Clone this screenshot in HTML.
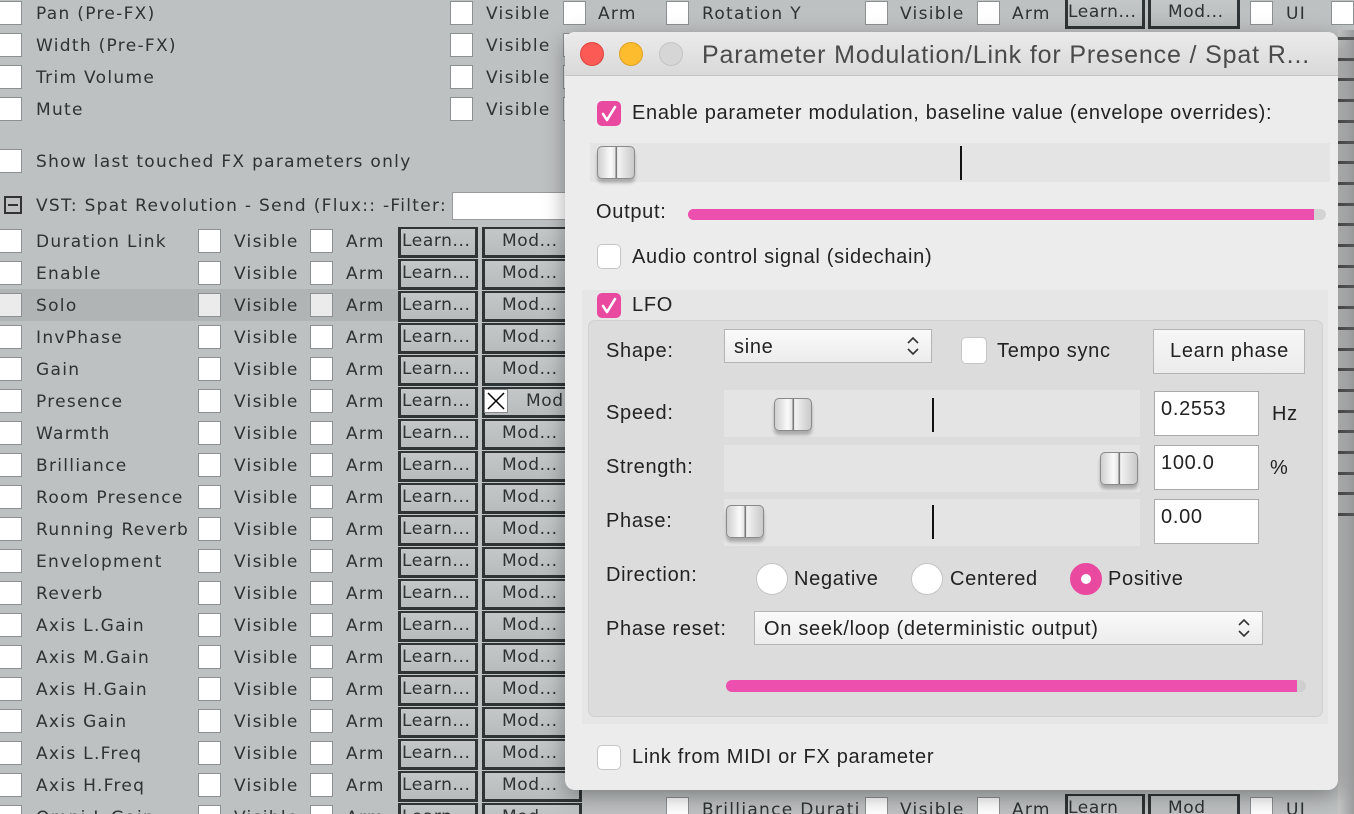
<!DOCTYPE html>
<html><head><meta charset="utf-8">
<style>
*{box-sizing:border-box;margin:0;padding:0}
html,body{width:1354px;height:814px;overflow:hidden}
body{background:#bec1c2;position:relative;font-family:"DejaVu Sans","Liberation Sans",sans-serif}
.a{position:absolute}
.bt{font-size:17px;color:#2e3233;letter-spacing:1.3px;line-height:20px;white-space:nowrap}
.cb{width:23px;height:24px;background:#fff;border:1px solid #8d9091}
.btn{border:3px solid #2f3436;border-top-width:2px;background:linear-gradient(#c4c7c8,#b9bcbd);font-size:17px;color:#2e3233;line-height:24px;white-space:nowrap;overflow:hidden;letter-spacing:0.6px}
#dlg{position:absolute;left:565px;top:32px;width:773px;height:758px;background:#ececec;border-radius:10px;box-shadow:0 6px 22px rgba(0,0,0,.35);overflow:hidden;font-family:"Liberation Sans",sans-serif;color:#222}
.d{position:absolute;font-size:20px;letter-spacing:0.7px;white-space:nowrap;line-height:22px}
.pk{position:absolute;width:24px;height:25px;background:#e9499f;border-radius:5px}
.wc{position:absolute;width:24px;height:25px;background:#fff;border:1px solid #c6c6c6;border-radius:5px}
.trk{position:absolute;background:#e4e4e4}
.th{position:absolute;width:38px;height:33px;border:1px solid #8a8a8a;border-radius:5px;background:linear-gradient(90deg,#cfcfcf,#fafafa 35%,#e4e4e4 48%,#777 49%,#777 52%,#f4f4f4 54%,#c9c9c9);box-shadow:0 4px 3px rgba(0,0,0,.25)}
.inp{position:absolute;background:#fff;border:1px solid #aaa;font-size:20px;letter-spacing:0.7px;padding:6px 0 0 6px}
.rd{position:absolute;width:32px;height:32px;border-radius:50%;background:#fff;border:1px solid #c4c4c4}
</style></head><body>
<div id="bg"></div>
<script>
var bg=document.getElementById('bg'),h='';
function t(x,y,s){h+='<div class="a bt" style="left:'+x+'px;top:'+(y-9)+'px">'+s+'</div>';}
function c(x,y,g){h+='<div class="a cb" style="left:'+x+'px;top:'+(y-12)+'px'+(g?';background:#ebebeb':'')+'"></div>';}
var top4=['Pan (Pre-FX)','Width (Pre-FX)','Trim Volume','Mute'];
for(var i=0;i<4;i++){var y=13+32*i;c(-1,y);t(36,y,top4[i]);c(450,y);t(486,y,'Visible');c(563,y);t(598,y,'Arm');}
c(-1,161);t(36,161,'Show last touched FX parameters only');
h+='<div class="a" style="left:4px;top:196px;width:18px;height:18px;border:2px solid #333"></div><div class="a" style="left:8px;top:204px;width:10px;height:2px;background:#333"></div>';
t(36,205,'VST: Spat Revolution - Send (Flux:: -Filter:');
h+='<div class="a" style="left:452px;top:192px;width:120px;height:28px;background:#fff;border:1px solid #999"></div>';
var names=['Duration Link','Enable','Solo','InvPhase','Gain','Presence','Warmth','Brilliance','Room Presence','Running Reverb','Envelopment','Reverb','Axis L.Gain','Axis M.Gain','Axis H.Gain','Axis Gain','Axis L.Freq','Axis H.Freq','Omni L.Gain'];
for(var i=0;i<names.length;i++){var y=241+32*i;var g=(i==2);
 if(g)h+='<div class="a" style="left:0;top:'+(y-16)+'px;width:398px;height:32px;background:#b1b4b5"></div>';
 c(-1,y,g);h+='<div class="a bt" style="left:36px;top:'+(y-9)+'px;width:158px;overflow:hidden">'+names[i]+'</div>';
 c(198,y,g);t(234,y,'Visible');c(310,y,g);t(346,y,'Arm');
 h+='<div class="a btn" style="left:398px;top:'+(y-14)+'px;width:80px;height:31px;padding-left:1px">Learn...</div>';
 h+='<div class="a btn" style="left:482px;top:'+(y-14)+'px;width:100px;height:31px;padding-left:17px">'+(i==5?'&nbsp;&nbsp;&nbsp;&nbsp;Mod':'Mod...')+'</div>';
 if(i==5)h+='<div class="a" style="left:484px;top:'+(y-12)+'px;width:24px;height:24px;background:#fff;border:1px solid #888"><svg width="22" height="22"><path d="M3 3L19 19M19 3L3 19" stroke="#000" stroke-width="1.5"/></svg></div>';
}
c(666,13);t(702,13,'Rotation Y');c(865,13);t(900,13,'Visible');c(977,13);t(1012,13,'Arm');
h+='<div class="a btn" style="left:1065px;top:-2px;width:80px;height:31px">Learn...</div>';
h+='<div class="a btn" style="left:1148px;top:-2px;width:92px;height:31px;padding-left:17px">Mod...</div>';
c(1250,13);t(1286,13,'UI');c(1331,13);
c(666,809);t(702,809,'Brilliance Durati');c(865,809);t(900,809,'Visible');c(977,809);t(1012,809,'Arm');
h+='<div class="a btn" style="left:1065px;top:794px;width:80px;height:31px">Learn</div>';
h+='<div class="a btn" style="left:1148px;top:794px;width:92px;height:31px;padding-left:17px">Mod</div>';
c(1250,809);t(1286,809,'UI');
h+='<div class="a" style="left:1338px;top:30px;width:16px;height:784px;background:linear-gradient(90deg,#c8c8c8,#9a9c9d)"></div>';
for(var i=0;i<24;i++)h+='<div class="a" style="left:1338px;top:'+(37+i*20.7)+'px;width:16px;height:3px;background:#555"></div>';
bg.innerHTML=h;
</script>
<div id="dlg">
 <div class="a" style="left:0;top:0;width:773px;height:44px;background:linear-gradient(#ebebeb,#d9d9d9);border-bottom:1px solid #c4c4c4"></div>
 <div class="a" style="left:15px;top:10px;width:24px;height:24px;border-radius:50%;background:#fc5a55;border:1px solid #e0443e"></div>
 <div class="a" style="left:54px;top:10px;width:24px;height:24px;border-radius:50%;background:#fdbc2e;border:1px solid #dfa123"></div>
 <div class="a" style="left:94px;top:10px;width:24px;height:24px;border-radius:50%;background:#d6d6d6;border:1px solid #c4c4c4"></div>
 <div class="d" style="left:137px;top:9px;font-size:25px;letter-spacing:0.85px;line-height:28px;color:#4a4a4a">Parameter Modulation/Link for Presence / Spat R...</div>

 <div class="pk" style="left:32px;top:69px"><svg width="24" height="25"><path d="M6 13l4 6 8-13" fill="none" stroke="#fff" stroke-width="2.6" stroke-linecap="round" stroke-linejoin="round"/></svg></div>
 <div class="d" style="left:67px;top:70px">Enable parameter modulation, baseline value (envelope overrides):</div>
 <div class="trk" style="left:25px;top:111px;width:740px;height:39px"></div>
 <div class="th" style="left:32px;top:114px"></div>
 <div class="a" style="left:395px;top:114px;width:2px;height:34px;background:#111"></div>
 <div class="d" style="left:31px;top:169px">Output:</div>
 <div class="a" style="left:123px;top:177px;width:638px;height:11px;border-radius:6px;background:#d3d3d3"></div>
 <div class="a" style="left:123px;top:177px;width:626px;height:11px;border-radius:6px 0 0 6px;background:#ec4fae"></div>
 <div class="wc" style="left:32px;top:212px"></div>
 <div class="d" style="left:67px;top:214px">Audio control signal (sidechain)</div>

 <div class="a" style="left:17px;top:258px;width:746px;height:434px;background:#e6e6e6"></div>
 <div class="pk" style="left:32px;top:261px"><svg width="24" height="25"><path d="M6 13l4 6 8-13" fill="none" stroke="#fff" stroke-width="2.6" stroke-linecap="round" stroke-linejoin="round"/></svg></div>
 <div class="d" style="left:67px;top:262px">LFO</div>
 <div class="a" style="left:23px;top:288px;width:735px;height:397px;background:#dcdcdc;border:1px solid #d0d0d0;border-radius:7px"></div>

 <div class="d" style="left:41px;top:308px">Shape:</div>
 <div class="a" style="left:159px;top:297px;width:208px;height:34px;background:linear-gradient(#fafafa,#ececec);border:1px solid #b4b4b4"></div>
 <div class="d" style="left:169px;top:304px">sine</div>
 <svg class="a" style="left:340px;top:302px" width="16" height="24"><path d="M3 9l5-5 5 5M3 15l5 5 5-5" fill="none" stroke="#333" stroke-width="1.6"/></svg>
 <div class="wc" style="left:396px;top:305px;width:26px;height:27px"></div>
 <div class="d" style="left:432px;top:308px">Tempo sync</div>
 <div class="a" style="left:588px;top:297px;width:152px;height:45px;background:linear-gradient(#f6f6f6,#ececec);border:1px solid #b4b4b4"></div>
 <div class="d" style="left:605px;top:308px">Learn phase</div>

 <div class="d" style="left:41px;top:370px">Speed:</div>
 <div class="trk" style="left:159px;top:358px;width:416px;height:47px"></div>
 <div class="th" style="left:209px;top:366px"></div>
 <div class="a" style="left:367px;top:366px;width:2px;height:34px;background:#111"></div>
 <div class="inp" style="left:589px;top:359px;width:105px;height:45px">0.2553</div>
 <div class="d" style="left:707px;top:371px">Hz</div>

 <div class="d" style="left:41px;top:424px">Strength:</div>
 <div class="trk" style="left:159px;top:413px;width:416px;height:47px"></div>
 <div class="th" style="left:535px;top:420px"></div>
 <div class="inp" style="left:589px;top:413px;width:105px;height:45px">100.0</div>
 <div class="d" style="left:705px;top:425px">%</div>

 <div class="d" style="left:41px;top:478px">Phase:</div>
 <div class="trk" style="left:159px;top:467px;width:416px;height:47px"></div>
 <div class="th" style="left:161px;top:473px"></div>
 <div class="a" style="left:367px;top:473px;width:2px;height:34px;background:#111"></div>
 <div class="inp" style="left:589px;top:467px;width:105px;height:45px">0.00</div>

 <div class="d" style="left:41px;top:532px">Direction:</div>
 <div class="rd" style="left:191px;top:531px"></div>
 <div class="d" style="left:229px;top:536px">Negative</div>
 <div class="rd" style="left:346px;top:531px"></div>
 <div class="d" style="left:385px;top:536px">Centered</div>
 <div class="rd" style="left:505px;top:531px;background:#e9499f;border-color:#e9499f"></div>
 <div class="a" style="left:516px;top:542px;width:10px;height:10px;border-radius:50%;background:#fff"></div>
 <div class="d" style="left:543px;top:536px">Positive</div>

 <div class="d" style="left:41px;top:586px">Phase reset:</div>
 <div class="a" style="left:189px;top:579px;width:509px;height:34px;background:linear-gradient(#fafafa,#ececec);border:1px solid #b4b4b4"></div>
 <div class="d" style="left:199px;top:586px">On seek/loop (deterministic output)</div>
 <svg class="a" style="left:671px;top:584px" width="16" height="24"><path d="M3 9l5-5 5 5M3 15l5 5 5-5" fill="none" stroke="#333" stroke-width="1.6"/></svg>

 <div class="a" style="left:161px;top:648px;width:580px;height:12px;border-radius:6px;background:#cfcfcf"></div>
 <div class="a" style="left:161px;top:648px;width:571px;height:12px;border-radius:6px 0 0 6px;background:#ec4fae"></div>

 <div class="wc" style="left:32px;top:713px"></div>
 <div class="d" style="left:67px;top:714px">Link from MIDI or FX parameter</div>
</div>
</body></html>
